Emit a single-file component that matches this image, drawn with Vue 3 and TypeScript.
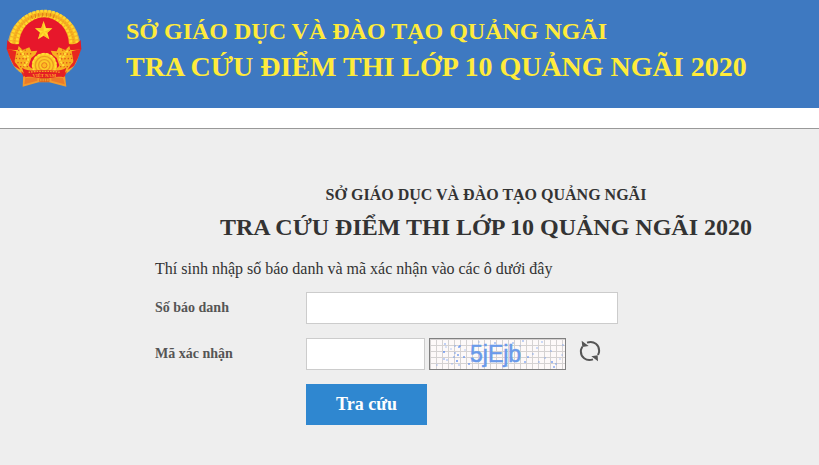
<script setup lang="ts">
import { ref } from 'vue'

const candidateNumber = ref('')
const captcha = ref('')

// Noise specks of the captcha: x, y, opacity
const specks: [number, number, number][] = [
  [16, 6, 0.5], [17, 9, 0.3], [26, 8, 0.4], [31, 8, 0.7], [30, 9, 0.8], [22, 11, 0.3],
  [15, 14, 0.9], [26, 15, 0.5], [25, 19, 0.5], [15, 21, 0.5], [18, 22, 0.4], [29, 17, 0.8],
  [28, 23, 0.9], [30, 27, 0.4], [35, 19, 0.8], [40, 26, 0.8], [36, 12, 0.3], [23, 26, 0.3],
  [50, 4, 0.3], [57, 28, 0.5], [66, 5, 0.6], [72, 8, 0.4], [78, 28, 0.4], [84, 5, 0.5],
  [91, 8, 0.3], [94, 3, 0.5], [96, 24, 0.7], [99, 19, 0.7], [104, 16, 0.4], [108, 10, 0.4],
  [113, 4, 0.4], [110, 24, 0.4], [116, 20, 0.4], [122, 13, 0.4], [123, 24, 0.8], [125, 29, 0.7],
  [127, 26, 0.5], [134, 7, 0.4], [133, 17, 0.3], [131, 21, 0.3], [8, 27, 0.3], [43, 23, 0.5],
]
</script>

<template>
  <div class="page">
    <header class="banner">
      <svg class="emblem" viewBox="18 24 228 240" role="img" aria-label="Quốc huy Việt Nam">
        <path d="M70 218 L68 260 L116 247 L148 247 L199 260 L194 218Z" fill="#f39a2c" />
        <path d="M76 234 L73 253 L112 242 L112 231Z M154 231 L154 242 L194 253 L189 234Z" fill="#ec7a28" />
        <path d="M25 138 A107 107 0 0 1 239 138 C238 178 218 214 192 222 L72 222 C46 214 26 178 25 138Z" fill="#f7b422" stroke="#c9a65c" stroke-width="3" />
        <path d="M33 132 A99 99 0 0 1 231 132" fill="none" stroke="#ffd92e" stroke-width="8" stroke-dasharray="8 4" />
        <path d="M43 132 A89 89 0 0 1 221 132" fill="none" stroke="#f0a01f" stroke-width="5" stroke-dasharray="4 4" />
        <path d="M51 132 A81 81 0 0 1 213 132" fill="none" stroke="#ffdc2c" stroke-width="8" stroke-dasharray="7 4" />
        <path d="M94 47 L97 57 M105 42 L107 54 M116 40 L117 51 M128 39 V50 M140 39 V50 M152 40 L150 52 M163 43 L160 55" stroke="#df7a18" stroke-width="3" />
        <path d="M22 120 C32 134 50 136 66 128 L74 143 C55 153 39 150 20 148Z" fill="#e51c23" />
        <path d="M242 120 C232 134 214 136 198 128 L190 143 C209 153 225 150 244 148Z" fill="#e51c23" />
        <path d="M20 146 L49 154 L44 182 L64 214 L78 226 L70 230 L62 210 L42 198 L30 174Z" fill="#e8281f" />
        <path d="M244 146 L215 154 L220 182 L200 214 L186 226 L194 230 L202 210 L222 198 L234 174Z" fill="#e8281f" />
        <ellipse cx="132" cy="134" rx="75" ry="82" fill="#e7172b" />
        <path d="M56 138 L68 150 L88 142 L94 154 L112 152 L106 164 L94 174 L86 196 L92 208 L66 210 L44 186Z" fill="#f8b020" />
        <path d="M208 138 L196 150 L176 142 L170 154 L152 152 L158 164 L170 174 L178 196 L172 208 L198 210 L220 186Z" fill="#f8b020" />
        <path d="M54 151 L84 150 M50 163 L94 161 M47 175 L86 177 M52 188 L84 189 M60 200 L88 200 M210 151 L180 150 M214 163 L170 161 M217 175 L178 177 M212 188 L180 189 M204 200 L176 200" fill="none" stroke="#e0521c" stroke-width="4" stroke-dasharray="4 6" />
        <path d="M60 154 C72 150 66 176 80 170 C88 164 88 184 72 198 M204 154 C192 150 198 176 184 170 C176 164 176 184 192 198" fill="none" stroke="#ffe03a" stroke-width="6" stroke-dasharray="7 3" />
        <circle cx="133" cy="196" r="37" fill="#fdca28" />
        <circle cx="133" cy="196" r="35" fill="none" stroke="#ffe233" stroke-width="5" stroke-dasharray="8 5" />
        <circle cx="133" cy="196" r="27" fill="none" stroke="#ed9c20" stroke-width="4" />
        <circle cx="133" cy="196" r="17" fill="none" stroke="#ed9c20" stroke-width="4" />
        <circle cx="133" cy="196" r="8" fill="#ffb922" stroke="#e97920" stroke-width="3" />
        <path d="M66 203 C83 215 101 211 133 211 C166 211 181 215 199 203 L191 232 C172 227 162 235 133 235 C104 235 96 227 75 232Z" fill="#e41e24" />
        <path d="M86 217 C108 213 158 213 180 217" fill="none" stroke="#f7a024" stroke-width="4" stroke-dasharray="5 3" />
        <text x="133" y="231" text-anchor="middle" class="emblem-name">VIỆT NAM</text>
        <path d="M119 235 H147 V245 H119Z" fill="#ef962a" stroke="#da571b" stroke-width="2" />
        <path d="M126 235 V245 M133 235 V245 M140 235 V245" stroke="#d74d18" stroke-width="2" />
        <path d="M131 63 L138 84 L157 85 L142 98 L148 118 L131 107 L114 118 L120 98 L105 85 L124 84Z" fill="#ffe12e" />
        <path d="M131 63 V96 L124 84Z M157 85 L131 96 L142 98Z M148 118 L131 96 V107Z M114 118 L131 96 L120 98Z M105 85 L131 96 L124 84Z" fill="#fbc422" />
      </svg>
      <div class="banner-text">
        <p class="banner-dept">SỞ GIÁO DỤC VÀ ĐÀO TẠO QUẢNG NGÃI</p>
        <p class="banner-title">TRA CỨU ĐIỂM THI LỚP 10 QUẢNG NGÃI 2020</p>
      </div>
    </header>

    <main class="content">
      <form class="lookup" @submit.prevent>
        <h2 class="dept">SỞ GIÁO DỤC VÀ ĐÀO TẠO QUẢNG NGÃI</h2>
        <h1 class="title">TRA CỨU ĐIỂM THI LỚP 10 QUẢNG NGÃI 2020</h1>
        <p class="hint">Thí sinh nhập số báo danh và mã xác nhận vào các ô dưới đây</p>
        <div class="fields">
          <label for="candidate">Số báo danh</label>
          <input id="candidate" v-model="candidateNumber" class="wide" type="text" />
          <label for="captcha">Mã xác nhận</label>
          <div class="captcha-row">
            <input id="captcha" v-model="captcha" class="short" type="text" />
            <svg class="captcha" viewBox="0 0 137 32" role="img" aria-label="Mã xác nhận 5jEjb">
              <defs>
                <pattern id="grid" width="6" height="6" patternUnits="userSpaceOnUse" x="2" y="2">
                  <path d="M0 5.500H6 M5.500 0V6" fill="none" stroke="#d5d2d2" />
                </pattern>
              </defs>
              <rect width="137" height="32" fill="#fdf9f9" />
              <rect width="137" height="32" fill="url(#grid)" />
              <circle v-for="([x, y, o], i) in specks" :key="i" :cx="x" :cy="y" r="1" fill="#5c8df0" :opacity="o" />
              <text x="41" y="24" class="captcha-text">5jEjb</text>
              <rect x="0.5" y="0.5" width="136" height="31" fill="none" stroke="#808080" />
            </svg>
            <button class="refresh" type="button" aria-label="Đổi mã xác nhận">
              <svg viewBox="27 24 66 66" aria-hidden="true">
                <path d="M51 32 C71 25 90 38 87 61 L84 69 M69 82 C49 89 30 76 33 53 L37 44" fill="none" stroke="#555" stroke-width="6" />
                <path d="M35 26 L37 45 L56 42Z M84 88 L83 70 L64 73Z" fill="#555" />
              </svg>
            </button>
          </div>
          <button class="submit" type="submit">Tra cứu</button>
        </div>
      </form>
    </main>
  </div>
</template>

<style>
body {
  margin: 0;
  background: #eee;
}
</style>

<style scoped>
.page {
  display: flex;
  flex-direction: column;
  min-height: 100vh;
  background: #fff;
  color: #333;
  font-family: "Liberation Serif", "Times New Roman", serif;
}
.banner {
  display: flex;
  align-items: flex-start;
  gap: 44px;
  padding: 8px 6px 20px;
  background: #3e79c1;
}
.emblem {
  flex: none;
  width: 76px;
  height: 80px;
}
.emblem-name {
  font-size: 14px;
  font-weight: bold;
  fill: #ffad25;
}
.banner-text {
  padding-top: 5px;
  color: #ffeb3b;
  font-weight: bold;
}
.banner-text p {
  margin: 0;
  line-height: 36px;
}
.banner-dept {
  font-size: 24px;
}
.banner-title {
  font-size: 28px;
}
.content {
  flex: 1;
  margin-top: 20px;
  padding: 56px 2px 24px 155px;
  border-top: 1px solid #999;
  background: #eee;
}
.lookup {
  max-width: 662px;
}
.dept,
.title {
  margin: 0;
  text-align: center;
}
.dept {
  font-size: 16px;
  line-height: 20px;
}
.title {
  margin-top: 8px;
  font-size: 24px;
  line-height: 28px;
}
.hint {
  margin: 18px 0 13px;
  font-size: 16px;
  line-height: 20px;
}
.fields {
  display: grid;
  grid-template-columns: 151px 1fr;
  row-gap: 14px;
  align-items: center;
}
label {
  color: #555;
  font-size: 14px;
  font-weight: bold;
}
input {
  box-sizing: border-box;
  height: 32px;
  padding: 4px 8px;
  border: 1px solid #ccc;
  border-radius: 0;
  background: #fff;
  font: inherit;
}
.wide {
  width: 312px;
}
.short {
  width: 119px;
}
.captcha-row {
  display: flex;
  align-items: flex-start;
  gap: 4px;
}
.captcha {
  width: 137px;
  height: 32px;
}
.captcha-text {
  font-family: "Liberation Sans", Arial, sans-serif;
  font-size: 23px;
  fill: #6a9aea;
  stroke: #6a9aea;
  stroke-width: 0.5;
}
.refresh {
  display: flex;
  margin-left: 8px;
  padding: 2px 1px;
  border: 0;
  background: none;
  cursor: pointer;
}
.refresh svg {
  width: 22px;
  height: 22px;
}
.submit {
  grid-column: 2;
  justify-self: start;
  height: 41px;
  padding: 0 30px;
  border: 0;
  background: #2f87d0;
  color: #fff;
  font-family: inherit;
  font-size: 18px;
  font-weight: bold;
  cursor: pointer;
}
</style>
